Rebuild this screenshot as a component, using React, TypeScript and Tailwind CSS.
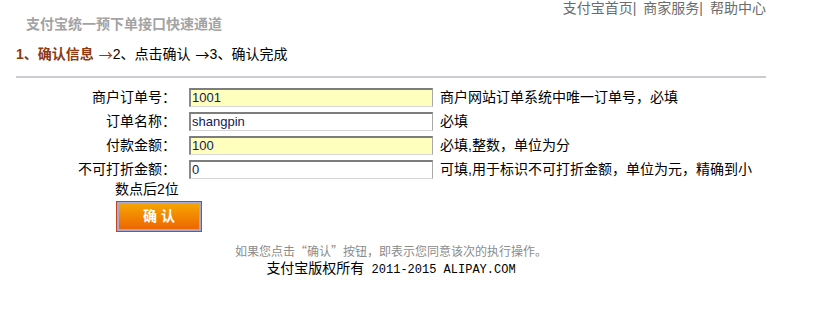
import React, { useState } from 'react';

const CJK = 'font-["Liberation_Sans","Noto_Sans_CJK_SC",sans-serif]';

const FIELDS = [
  { key: 'out_trade_no', label: '商户订单号：', value: '1001', required: true, note: '商户网站订单系统中唯一订单号，必填' },
  { key: 'subject', label: '订单名称：', value: 'shangpin', required: false, note: '必填' },
  { key: 'total_fee', label: '付款金额：', value: '100', required: true, note: '必填,整数，单位为分' },
  { key: 'undiscountable', label: '不可打折金额：', value: '0', required: false, note: '可填,用于标识不可打折金额，单位为元，精确到小' },
];

export default function App() {
  const [form, setForm] = useState<Record<string, string>>(
    Object.fromEntries(FIELDS.map((f) => [f.key, f.value]))
  );

  return (
    <div className={`bg-white w-[814px] h-[324px] ${CJK}`}>
      <div className="ml-4 w-[750px]">
        {/* header */}
        <div className="flex justify-between items-start h-[45px]">
          <div className="ml-[10px] mt-[15px] text-[14px] leading-[18px] font-bold text-[#a3a3a3]">
            支付宝统一预下单接口快速通道
          </div>
          <div className="text-[14px] leading-[16px] text-[#6b6b6b]">
            <a href="#">支付宝首页</a>|<a href="#" className="ml-[7px]">商家服务</a>|<a href="#" className="ml-[7px]">帮助中心</a>
          </div>
        </div>

        {/* steps */}
        <div className="flex items-center h-[18px] text-[14px] leading-[18px]">
          <span className="font-bold text-[#8c3a12]">1、确认信息</span>
          <span className='ml-[5px] text-[#8c3a12] font-["Noto_Sans_CJK_SC",sans-serif]'>→</span>
          <span className="text-black">2、点击确认</span>
          <span className='ml-[5px] text-black font-["Noto_Sans_CJK_SC",sans-serif]'>→</span>
          <span className="text-black">3、确认完成</span>
        </div>

        <div className="mt-[13px] h-[2px] bg-[#c9ccd0]" />

        {/* form */}
        <div className="mt-[10px] flex flex-col gap-[5px]">
          {FIELDS.map((f) => (
            <div key={f.key} className="flex items-center h-[19px] text-[14px] text-black">
              <label className="w-[160px] text-right whitespace-nowrap">{f.label}</label>
              <input
                type="text"
                value={form[f.key]}
                onChange={(e) => setForm({ ...form, [f.key]: e.target.value })}
                className={`ml-[13px] w-[244px] h-[19px] px-[1px] text-[13px] font-["Liberation_Sans",sans-serif] text-[#10205a] outline-none border-t-2 border-l-2 border-b border-r border-t-[#7d7d7d] border-l-[#8a8a8a] border-b-[#d6d6d6] border-r-[#a8a8a8] ${f.required ? 'bg-[#ffffbd]' : 'bg-white'}`}
              />
              <span className="ml-[7px] whitespace-nowrap">{f.note}</span>
            </div>
          ))}
        </div>
        <div className="pl-[99px] text-[14px] leading-[18px] text-black mt-[1px]">数点后2位</div>

        {/* submit */}
        <div className="mt-[3px] ml-[100px]">
          <button className="w-[86px] h-[31px] border border-[#c2451a] p-0">
            <span className="flex items-center justify-center w-full h-full border-2 border-[#a3aad6] bg-gradient-to-b from-[#f6a400] to-[#ec6600] text-white font-bold text-[14px] tracking-[4px] pl-[4px]">
              确认
            </span>
          </button>
        </div>

        {/* footer */}
        <div className="mt-[11px] text-center">
          <div className="text-[12px] leading-[16px] text-[#8c8c8c]">
            如果您点击<span className='font-["Noto_Sans_CJK_SC",sans-serif]'>“</span>确认<span className='font-["Noto_Sans_CJK_SC",sans-serif]'>”</span>按钮，即表示您同意该次的执行操作。
          </div>
          <div className="text-[14px] leading-[16px] text-black">
            支付宝版权所有
            <span className='font-["Liberation_Mono",monospace] text-[12px]'> 2011-2015 ALIPAY.COM</span>
          </div>
        </div>
      </div>
    </div>
  );
}
